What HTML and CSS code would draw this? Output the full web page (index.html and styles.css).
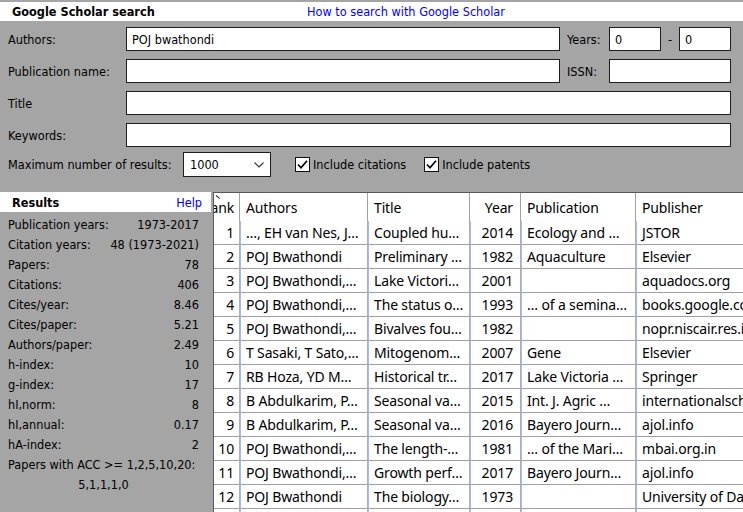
FILE: index.html
```html
<!DOCTYPE html>
<html lang="en">
<head>
<meta charset="utf-8">
<title>Google Scholar search</title>
<link rel="stylesheet" href="styles.css">
</head>
<body>
<div class="page">
  <header class="topbar">
    <span class="app-title">Google Scholar search</span>
    <a class="howto" href="#">How to search with Google Scholar</a>
  </header>

  <section class="form">
    <div class="row">
      <label class="lbl">Authors:</label>
      <input class="inp inp-main" value="POJ bwathondi" readonly>
      <label class="lbl2">Years:</label>
      <input class="inp inp-year" value="0" readonly>
      <span class="dash">-</span>
      <input class="inp inp-year" value="0" readonly>
    </div>
    <div class="row">
      <label class="lbl">Publication name:</label>
      <input class="inp inp-main" value="" readonly>
      <label class="lbl2">ISSN:</label>
      <input class="inp inp-issn" value="" readonly>
    </div>
    <div class="row">
      <label class="lbl">Title</label>
      <input class="inp inp-full" value="" readonly>
    </div>
    <div class="row">
      <label class="lbl">Keywords:</label>
      <input class="inp inp-full" value="" readonly>
    </div>
    <div class="row row-opts">
      <label class="lbl-max">Maximum number of results:</label>
      <div class="select">
        <span>1000</span>
        <svg class="chev" width="10" height="6" viewBox="0 0 10 6"><path d="M0.5 0.5 L5 5 L9.5 0.5" fill="none" stroke="#333" stroke-width="1.1"/></svg>
      </div>
      <span class="check cb1"><svg width="13" height="13" viewBox="0 0 13 13"><path d="M2 6.5 L5 9.8 L11 2.8" fill="none" stroke="#000" stroke-width="1.7"/></svg></span>
      <span class="cb-text">Include citations</span>
      <span class="check cb2"><svg width="13" height="13" viewBox="0 0 13 13"><path d="M2 6.5 L5 9.8 L11 2.8" fill="none" stroke="#000" stroke-width="1.7"/></svg></span>
      <span class="cb-text">Include patents</span>
    </div>
  </section>

  <div class="main">
    <aside class="results">
      <div class="results-head">
        <span class="results-title">Results</span>
        <a class="help" href="#">Help</a>
      </div>
      <div class="stats">
        <div class="stat"><span>Publication years:</span><span>1973-2017</span></div>
        <div class="stat"><span>Citation years:</span><span>48 (1973-2021)</span></div>
        <div class="stat"><span>Papers:</span><span>78</span></div>
        <div class="stat"><span>Citations:</span><span>406</span></div>
        <div class="stat"><span>Cites/year:</span><span>8.46</span></div>
        <div class="stat"><span>Cites/paper:</span><span>5.21</span></div>
        <div class="stat"><span>Authors/paper:</span><span>2.49</span></div>
        <div class="stat"><span>h-index:</span><span>10</span></div>
        <div class="stat"><span>g-index:</span><span>17</span></div>
        <div class="stat"><span>hI,norm:</span><span>8</span></div>
        <div class="stat"><span>hI,annual:</span><span>0.17</span></div>
        <div class="stat"><span>hA-index:</span><span>2</span></div>
        <div class="stat"><span>Papers with ACC &gt;= 1,2,5,10,20:</span></div>
        <div class="stat stat-center">5,1,1,1,0</div>
      </div>
    </aside>

    <div class="grid-wrap">
      <table class="grid">
        <colgroup>
          <col class="c-rank"><col class="c-auth"><col class="c-title"><col class="c-year"><col class="c-pub"><col class="c-publisher">
        </colgroup>
        <thead>
          <tr>
            <th class="rank"><span class="sortmark"></span><div class="clip-right">Rank</div></th>
            <th>Authors</th>
            <th>Title</th>
            <th class="num">Year</th>
            <th>Publication</th>
            <th>Publisher</th>
          </tr>
        </thead>
        <tbody>
          <tr><td class="rank">1</td><td>…, EH van Nes, J…</td><td>Coupled hu…</td><td class="num">2014</td><td>Ecology and …</td><td>JSTOR</td></tr>
          <tr><td class="rank">2</td><td>POJ Bwathondi</td><td>Preliminary …</td><td class="num">1982</td><td>Aquaculture</td><td>Elsevier</td></tr>
          <tr><td class="rank">3</td><td>POJ Bwathondi,…</td><td>Lake Victori…</td><td class="num">2001</td><td></td><td>aquadocs.org</td></tr>
          <tr><td class="rank">4</td><td>POJ Bwathondi,…</td><td>The status o…</td><td class="num">1993</td><td>… of a semina…</td><td>books.google.com</td></tr>
          <tr><td class="rank">5</td><td>POJ Bwathondi,…</td><td>Bivalves fou…</td><td class="num">1982</td><td></td><td>nopr.niscair.res.in</td></tr>
          <tr><td class="rank">6</td><td>T Sasaki, T Sato,…</td><td>Mitogenom…</td><td class="num">2007</td><td>Gene</td><td>Elsevier</td></tr>
          <tr><td class="rank">7</td><td>RB Hoza, YD M…</td><td>Historical tr…</td><td class="num">2017</td><td>Lake Victoria …</td><td>Springer</td></tr>
          <tr><td class="rank">8</td><td>B Abdulkarim, P…</td><td>Seasonal va…</td><td class="num">2015</td><td>Int. J. Agric …</td><td>internationalscholarsjournals.org</td></tr>
          <tr><td class="rank">9</td><td>B Abdulkarim, P…</td><td>Seasonal va…</td><td class="num">2016</td><td>Bayero Journ…</td><td>ajol.info</td></tr>
          <tr><td class="rank">10</td><td>POJ Bwathondi,…</td><td>The length-…</td><td class="num">1981</td><td>… of the Mari…</td><td>mbai.org.in</td></tr>
          <tr><td class="rank">11</td><td>POJ Bwathondi,…</td><td>Growth perf…</td><td class="num">2017</td><td>Bayero Journ…</td><td>ajol.info</td></tr>
          <tr><td class="rank">12</td><td>POJ Bwathondi</td><td>The biology…</td><td class="num">1973</td><td></td><td>University of Dar es Salaam</td></tr>
          <tr><td class="rank">13</td><td></td><td></td><td class="num"></td><td></td><td></td></tr>
        </tbody>
      </table>
    </div>
  </div>
</div>
</body>
</html>
```

FILE: styles.css
```css
html, body {
  margin: 0;
  padding: 0;
  width: 743px;
  height: 512px;
  overflow: hidden;
  background: #a5a5a5;
}

.page {
  width: 743px;
  height: 512px;
  display: flex;
  flex-direction: column;
  font-family: "DejaVu Sans Condensed", "DejaVu Sans", sans-serif;
  font-size: 12.6px;
  color: #000;
}

/* top bar */
.topbar {
  height: 19px;
  border-top: 2px solid #a5a5a5;
  background: #fff;
  display: flex;
  align-items: center;
  padding-left: 12px;
}
.app-title {
  width: 295px;
  font-weight: bold;
}
.howto, .help {
  color: #0000ff;
  text-decoration: none;
}

/* search form */
.form {
  padding: 6px 0 15px 8px;
  display: flex;
  flex-direction: column;
  gap: 8px;
}
.row {
  display: flex;
  align-items: center;
  height: 24px;
}
.lbl {
  width: 118px;
}
.lbl2 {
  width: 42px;
  margin-left: 7px;
}
.inp {
  box-sizing: border-box;
  height: 24px;
  border: 1px solid #1e1e1e;
  background: #fff;
  padding: 0 5px;
  font: inherit;
  color: #000;
  outline: none;
  margin: 0;
}
.inp-main { width: 434px; }
.inp-year { width: 52px; }
.inp-issn { width: 122px; }
.inp-full { width: 605px; }
.dash {
  width: 18px;
  text-align: center;
}

.row-opts {
  height: 25px;
  margin-top: -3px;
}
.lbl-max {
  width: 175px;
}
.select {
  box-sizing: border-box;
  width: 88px;
  height: 25px;
  border: 1px solid #1e1e1e;
  background: #fff;
  display: flex;
  align-items: center;
  justify-content: space-between;
  padding: 0 6px 0 6px;
}
.chev {
  margin-top: 1px;
}
.check {
  box-sizing: border-box;
  width: 15px;
  height: 15px;
  border: 1px solid #111;
  background: #fff;
  display: flex;
  align-items: center;
  justify-content: center;
}
.cb1 { margin-left: 24px; }
.cb2 { margin-left: 18px; }
.cb-text { margin-left: 3px; }

/* main area */
.main {
  flex: 1;
  display: flex;
  min-height: 0;
}
.results {
  width: 211px;
  flex: none;
}
.results-head {
  height: 20px;
  background: #fff;
  display: flex;
  align-items: center;
  justify-content: space-between;
  padding: 0 9px 0 12px;
}
.results-title {
  font-weight: bold;
}
.stats {
  padding: 2px 12px 0 8px;
}
.stat {
  height: 20px;
  line-height: 21px;
  display: flex;
  justify-content: space-between;
  white-space: nowrap;
}
.stat-center {
  justify-content: center;
}

.grid-wrap {
  margin-left: 2px;
  flex: 1;
  min-width: 0;
  background: #fff;
  border-top: 1px solid #5a5a5a;
  border-left: 1px solid #5a5a5a;
  overflow: hidden;
}
.grid {
  table-layout: fixed;
  border-collapse: separate;
  border-spacing: 0;
  width: 660px;
  font-family: "Noto Sans", "Open Sans", sans-serif;
  font-size: 14px;
  letter-spacing: -0.15px;
  color: #000;
}
.c-rank { width: 26px; }
.c-auth { width: 128px; }
.c-title { width: 102px; }
.c-year { width: 51px; }
.c-pub { width: 115px; }
.c-publisher { width: 238px; }

.grid th, .grid td {
  white-space: nowrap;
  overflow: hidden;
  padding: 0 0 0 5px;
  text-align: left;
  font-weight: normal;
}
.grid th {
  height: 27px;
  padding-top: 1px;
  border-right: 1px solid #a0a0a0;
  border-left: 1px solid #fff;
  position: relative;
}
.grid td {
  height: 23px;
  border-bottom: 1px solid #a0a0a0;
  border-right: 1px solid #b0b0b0;
  border-left: 1px solid #a7bae8;
}
.grid th.rank, .grid td.rank {
  border-left: none;
  padding-left: 0;
  padding-right: 5px;
  text-align: right;
}
.grid th.num, .grid td.num {
  text-align: right;
  padding-left: 0;
  padding-right: 7px;
}
.grid td:last-child, .grid th:last-child {
  border-right: none;
}
.clip-right {
  display: flex;
  justify-content: flex-end;
  overflow: hidden;
}
.sortmark {
  position: absolute;
  left: 2px;
  top: 2px;
  width: 5px;
  height: 1px;
  background: #333;
  transform: rotate(40deg);
  transform-origin: left center;
}
```
